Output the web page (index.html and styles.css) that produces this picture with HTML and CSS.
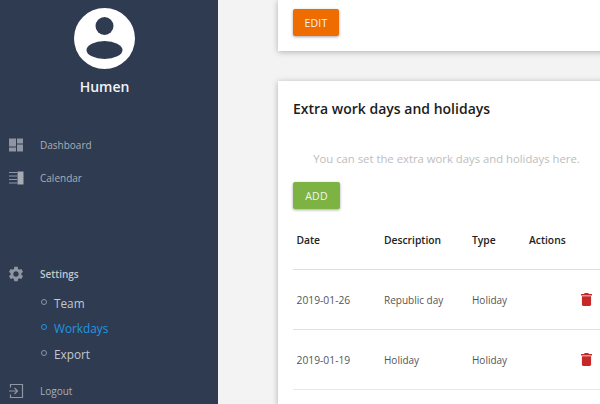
FILE: index.html
```html
<!DOCTYPE html>
<html lang="en">
  <head>
    <meta charset="UTF-8" />
    <title>Workdays</title>
    <link rel="stylesheet" href="styles.css">
  </head>
  <body>
    <div class="layout">
      <aside class="sidebar">
        <div class="profile">
          <svg class="avatar" viewBox="0 0 61 61">
            <circle cx="30.5" cy="30.5" r="30.5" fill="#fff" />
            <circle cx="30.5" cy="18" r="9" fill="#2f3b50" />
            <ellipse cx="30.5" cy="42" rx="18" ry="9" fill="#2f3b50" />
          </svg>
          <div class="profile-name">Humen</div>
        </div>

        <nav class="menu">
          <a class="menu-item">
            <svg class="menu-icon" viewBox="0 0 16 15">
              <path d="M1 1h7v8H1zM9 1h6v5H9zM1 10h7v4H1zM9 7h6v7H9z" fill="#8f95a2" />
            </svg>
            Dashboard
          </a>
          <a class="menu-item">
            <svg class="menu-icon" viewBox="0 0 16 15">
              <path d="M1 1.5h8v1H1zM1 5h8v1H1zM1 8.500h8v1H1zM1 12h8v1H1z" fill="#8f95a2" />
              <path d="M9.500 1h6v13h-6z" fill="#a5aab5" />
            </svg>
            Calendar
          </a>
        </nav>

        <div class="settings">
          <div class="menu-item settings-title">
            <svg class="menu-icon gear" viewBox="0 0 24 24">
              <path d="M19.140 12.940c.04-.3.060-.61.060-.94 0-.32-.02-.64-.07-.94l2.030-1.580a.49.49 0 0 0 .12-.61l-1.920-3.320a.49.49 0 0 0-.59-.22l-2.390.96c-.5-.38-1.030-.7-1.620-.94l-.36-2.540a.48.48 0 0 0-.48-.41h-3.840a.48.48 0 0 0-.47.41l-.36 2.540c-.59.24-1.130.57-1.620.94l-2.390-.96a.48.48 0 0 0-.59.22L2.710 8.870a.48.48 0 0 0 .12.61l2.030 1.580c-.05.3-.09.63-.09.94s.02.64.07.94l-2.030 1.580a.49.49 0 0 0-.12.61l1.920 3.320c.12.22.37.29.59.22l2.390-.96c.5.38 1.030.7 1.620.94l.36 2.540c.05.24.24.41.48.41h3.840c.24 0 .44-.17.47-.41l.36-2.540c.59-.24 1.130-.56 1.620-.94l2.390.96c.22.08.47 0 .59-.22l1.920-3.320c.12-.22.070-.47-.12-.61l-2.010-1.580zM12 15.600A3.610 3.610 0 0 1 8.400 12c0-1.980 1.620-3.600 3.600-3.600s3.600 1.620 3.600 3.600-1.620 3.600-3.600 3.600z" fill="#8f95a2" />
            </svg>
            Settings
          </div>
          <a class="sub-item"><span class="dot"></span>Team</a>
          <a class="sub-item active"><span class="dot"></span>Workdays</a>
          <a class="sub-item"><span class="dot"></span>Export</a>
        </div>

        <a class="menu-item logout">
          <svg class="menu-icon" viewBox="0 0 16 16">
            <path d="M2.500 4.500V1.500h12v13h-12v-3" fill="none" stroke="#8f95a2" stroke-width="1.200" />
            <path d="M1 8h8M6.500 5l3 3-3 3" fill="none" stroke="#8f95a2" stroke-width="1.200" />
          </svg>
          Logout
        </a>
      </aside>

      <main class="content">
        <section class="card card-top">
          <button class="btn btn-edit">EDIT</button>
        </section>

        <section class="card">
          <h2 class="card-title">Extra work days and holidays</h2>
          <p class="hint">You can set the extra work days and holidays here.</p>
          <button class="btn btn-add">ADD</button>

          <table class="days">
            <thead>
              <tr>
                <th class="col-date">Date</th>
                <th class="col-desc">Description</th>
                <th class="col-type">Type</th>
                <th>Actions</th>
              </tr>
            </thead>
            <tbody>
              <tr>
                <td class="cell-date">2019-01-26</td>
                <td>Republic day</td>
                <td>Holiday</td>
                <td class="cell-action">
                  <svg class="trash" viewBox="0 0 12 14">
                    <path d="M4 0h4l.6 1H12v1.500H0V1h3.400zM1 3.500h10V12.500a1.500 1.500 0 0 1-1.500 1.500h-7A1.500 1.500 0 0 1 1 12.500z" fill="#c62828" />
                  </svg>
                </td>
              </tr>
              <tr>
                <td class="cell-date">2019-01-19</td>
                <td>Holiday</td>
                <td>Holiday</td>
                <td class="cell-action">
                  <svg class="trash" viewBox="0 0 12 14">
                    <path d="M4 0h4l.6 1H12v1.500H0V1h3.400zM1 3.500h10V12.500a1.500 1.500 0 0 1-1.500 1.500h-7A1.500 1.500 0 0 1 1 12.500z" fill="#c62828" />
                  </svg>
                </td>
              </tr>
            </tbody>
          </table>
        </section>
      </main>
    </div>
  </body>
</html>
```

FILE: styles.css
```css
html,
body {
  margin: 0;
  height: 404px;
  overflow: hidden;
}

body {
  background-color: #f3f3f3;
  font-family: "Open Sans", "Noto Sans", Arial, sans-serif;
  color: #333;
}

.layout {
  display: flex;
  height: 404px;
}

.sidebar {
  width: 218px;
  flex-shrink: 0;
  background-color: #2f3b50;
  color: #a9aeb9;
  font-size: 10px;
}

.profile {
  display: flex;
  flex-direction: column;
  align-items: center;
  padding: 8px 9px 0 0;
}

.avatar {
  width: 61px;
  height: 61px;
}

.profile-name {
  margin-top: 8px;
  font-size: 14px;
  font-weight: 600;
  line-height: 20px;
  color: #f1f2f4;
}

.menu {
  margin-top: 31px;
}

.menu-item {
  display: flex;
  align-items: center;
  height: 33px;
  padding-left: 8px;
}

.menu-icon {
  width: 16px;
  height: 16px;
  margin-right: 16px;
  flex-shrink: 0;
}

.settings {
  margin-top: 63px;
}

.settings-title {
  font-weight: 600;
  color: #c3c7cf;
}

.gear {
  width: 18px;
  height: 18px;
  margin-left: -1px;
  margin-right: 15px;
}

.sub-item {
  display: flex;
  align-items: center;
  height: 25.500px;
  padding-left: 41px;
  font-size: 11.800px;
  color: #c3c7cf;
}

.dot {
  width: 4px;
  height: 4px;
  margin: -2px 7px 0 0;
  border: 1.500px solid #8f95a2;
  border-radius: 50%;
}

.active {
  color: #2196e3;
}

.active .dot {
  border-color: #2196e3;
}

.logout {
  margin-top: 8px;
}

.content {
  flex: 1;
  padding-left: 60px;
  overflow: hidden;
}

.card {
  width: 307px;
  padding: 15px;
  background-color: #fff;
  box-shadow: 0 1px 6px rgba(0, 0, 0, 0.28);
}

.card-top {
  height: 27px;
  padding-top: 9px;
  margin-bottom: 30px;
}

.card-title {
  margin: 3px 0 0;
  font-size: 14px;
  font-weight: 600;
  line-height: 20px;
  color: #1c1c1c;
}

.hint {
  margin: 31px 0 0;
  font-size: 11.300px;
  line-height: 18px;
  text-align: center;
  white-space: nowrap;
  color: #bdbdbd;
}

.btn {
  display: block;
  height: 27px;
  padding: 0;
  border: none;
  border-radius: 2px;
  font-family: inherit;
  font-size: 10.500px;
  letter-spacing: 0.2px;
  color: #f4f4f4;
  box-shadow: 0 1px 3px rgba(0, 0, 0, 0.35);
}

.btn-edit {
  width: 46px;
  background-color: #ef6c00;
}

.btn-add {
  width: 47px;
  margin-top: 14px;
  background-color: #7cb342;
}

.days {
  width: 307px;
  margin-top: 1px;
  border-collapse: collapse;
  table-layout: fixed;
  font-size: 10px;
}

.days th {
  height: 59px;
  padding: 0 0 0 3.500px;
  font-size: 10.300px;
  font-weight: 600;
  text-align: left;
  color: #222;
  white-space: nowrap;
}

.days td {
  height: 59px;
  padding: 0 0 0 3.500px;
  border-top: 1px solid #e0e0e0;
  color: #555;
  white-space: nowrap;
}

.days .cell-date {
  font-size: 10.300px;
}

.days tbody tr:last-child td {
  border-bottom: 1px solid #e8e8e8;
}

.col-date {
  width: 84px;
}

.col-desc {
  width: 84.500px;
}

.col-type {
  width: 53.500px;
}

.days .cell-action {
  padding-right: 8.500px;
  text-align: right;
}

.trash {
  display: inline-block;
  width: 11px;
  height: 13px;
  margin-top: -2px;
  vertical-align: middle;
}
```
